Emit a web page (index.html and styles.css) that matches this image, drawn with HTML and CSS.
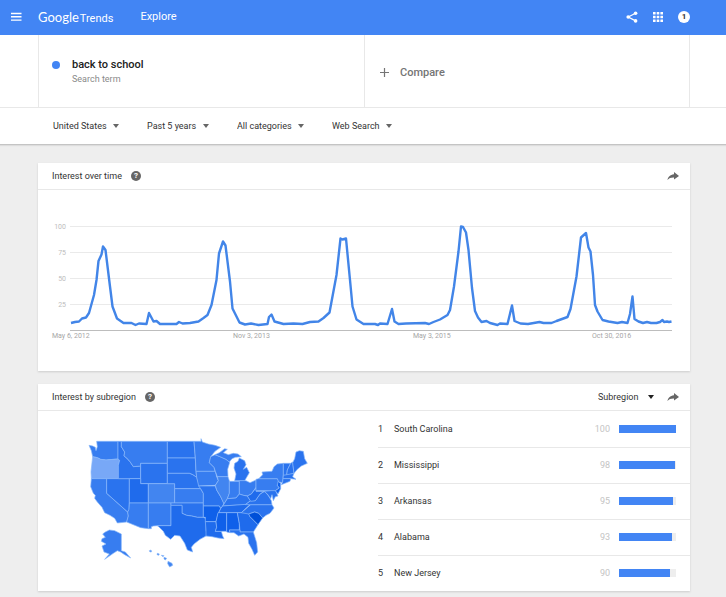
FILE: index.html
```html
<!DOCTYPE html>
<html lang="en">
<head>
    <meta charset="UTF-8">
    <meta name="viewport" content="width=device-width, initial-scale=1.0">
    <title>back to school - Explore - Google Trends</title>
    <link rel="stylesheet" href="styles.css">
</head>
<body>
    <header class="topbar">
        <button type="button" class="icon-btn" aria-label="Main menu">
            <svg width="12" height="10" viewBox="0 0 12 10"><path d="M1 1.5h10.500M1 4.8h10.500M1 8.100h10.500" stroke="#fff" stroke-width="1.4"/></svg>
        </button>
        <a href="#" class="logo"><span class="logo-google">Google</span><span class="logo-trends">Trends</span></a>
        <a href="#" class="explore">Explore</a>
        <div class="topbar-actions">
            <button type="button" class="icon-btn" aria-label="Share">
                <svg width="12" height="12" viewBox="0 0 12 12"><path d="M9.5 2.2L2.3 6l7.2 3.9" fill="none" stroke="#fff" stroke-width="1.2"/><g fill="#fff"><circle cx="9.6" cy="2.2" r="1.8"/><circle cx="2.2" cy="6" r="1.8"/><circle cx="9.6" cy="9.9" r="1.8"/></g></svg>
            </button>
            <button type="button" class="icon-btn" aria-label="Apps">
                <svg width="10" height="10" viewBox="0 0 10 10"><path d="M0 1.3h2.6M3.7 1.3h2.6M7.4 1.3H10M0 5h2.6M3.7 5h2.6M7.4 5H10M0 8.7h2.6M3.7 8.7h2.6M7.4 8.7H10" stroke="#fff" stroke-width="2.4"/></svg>
            </button>
            <button type="button" class="badge" aria-label="1 notification">1</button>
        </div>
    </header>

    <!-- Search terms -->
    <section class="terms">
        <div class="term">
            <span class="dot"></span>
            <div>
                <div class="term-name">back to school</div>
                <div class="term-type">Search term</div>
            </div>
        </div>
        <button type="button" class="compare">
            <svg width="9" height="9" viewBox="0 0 9 9"><path d="M4.5 0v9M0 4.5h9" stroke="#757575" stroke-width="1.2"/></svg>
            Compare
        </button>
    </section>

    <!-- Filters -->
    <nav class="filters">
        <div class="dropdown">
            <select aria-label="Location"><option>United States</option></select>
            <svg width="6" height="4" viewBox="0 0 6 4"><path d="M0 0h6L3 4z"/></svg>
        </div>
        <div class="dropdown">
            <select aria-label="Time range"><option>Past 5 years</option></select>
            <svg width="6" height="4" viewBox="0 0 6 4"><path d="M0 0h6L3 4z"/></svg>
        </div>
        <div class="dropdown">
            <select aria-label="Category"><option>All categories</option></select>
            <svg width="6" height="4" viewBox="0 0 6 4"><path d="M0 0h6L3 4z"/></svg>
        </div>
        <div class="dropdown">
            <select aria-label="Search type"><option>Web Search</option></select>
            <svg width="6" height="4" viewBox="0 0 6 4"><path d="M0 0h6L3 4z"/></svg>
        </div>
    </nav>

    <main>
        <section class="card">
            <div class="card-header">
                <h2>Interest over time</h2>
                <button type="button" class="help" aria-label="Help">?</button>
                <button type="button" class="icon-btn share" aria-label="Share">
                    <svg width="12" height="10" viewBox="0 0 12 10"><path d="M7 1l5 4-5 3.6V6.4C4 6.3 2 7 .4 9 1 6 3 3.6 7 3.2z" fill="#666"/></svg>
                </button>
            </div>
            <svg class="chart" viewBox="0 0 652 181" role="img" aria-label="Interest over time">
                <path class="grid" d="M32 36.5H634M32 62.5H634M32 88.5H634M32 114.5H634"/>
                <path class="axis" d="M32 140.5H634"/>
                <g class="y-labels">
                    <text x="28" y="39">100</text>
                    <text x="28" y="65">75</text>
                    <text x="28" y="91">50</text>
                    <text x="28" y="117">25</text>
                </g>
                <g class="x-labels">
                    <text x="14" y="148">May 6, 2012</text>
                    <text x="195" y="148">Nov 3, 2013</text>
                    <text x="375" y="148">May 3, 2015</text>
                    <text x="554" y="148">Oct 30, 2016</text>
                </g>
                <polyline class="line" stroke-width="2.4" points="33,133 37,132 41,131.5 44,128.5 48,127.5 51,123 56,105 58.5,90 60.5,71 63.5,64.5 65,56.5 67.5,60 72,96.5 74.5,116.5 79,128.5 85.5,133 93.5,133 97.5,135 101,133.5 108.5,134 111,123 115.5,131.5 118.5,131 122,134 138.5,134 141,132 144.5,133.5 152,133 160.5,131.5 165.5,128 169.5,125 173.5,115 178.5,90 181,63.5 185,51.5 187.5,55.5 192,91.5 194.5,118.5 201.5,132.5 207,134.5 213,133.5 220.5,135 229.5,134 231,127 233.5,124.5 236.5,131.5 245.5,134 255.5,133.5 264.5,134 272,132 280.5,131.5 285.5,128 291.5,122.5 298.5,85 302.5,48.5 304.5,49.5 308,48.5 312,90 314.5,116.5 318.5,129.5 325.5,134 337,134 340,135 342,133.5 349.5,134 354,119 356.5,131.5 360.5,134 368,133.5 387,133 391,134 395.5,132 402,129.5 409.5,125 412,120 416,96.5 420.5,61.5 423,36.5 425,37 428,42.5 430.5,60 434,98 437,121 440,127.5 443.5,132 448.5,131 452,133 459.5,135 462,133.5 469.5,134 474,115.5 476.5,131 482.5,133.5 490,134 501.5,132 505.5,133 513.5,133 518.5,131 529.5,127 532.5,119 538.5,86.5 543,47.5 548,43 550.5,57.5 552.5,61.5 555,85 557,115 559.5,121.5 564.5,130 570.5,131.5 579.5,133 584,132 589.5,133 592,124 594.5,106.5 596.5,129 600.5,131.5 605,133 609,132 613,133 618.5,133 622,132 624.5,130 626,132 629,131.5 631,132 633.5,131.5"/>
            </svg>
        </section>

        <section class="card">
            <div class="card-header">
                <h2>Interest by subregion</h2>
                <button type="button" class="help" aria-label="Help">?</button>
                <div class="dropdown dropdown-region">
                    <select aria-label="Resolution"><option>Subregion</option></select>
                    <svg width="6" height="4" viewBox="0 0 6 4"><path d="M0 0h6L3 4z"/></svg>
                </div>
                <button type="button" class="icon-btn" aria-label="Share">
                    <svg width="12" height="10" viewBox="0 0 12 10"><path d="M7 1l5 4-5 3.6V6.4C4 6.3 2 7 .4 9 1 6 3 3.6 7 3.2z" fill="#666"/></svg>
                </button>
            </div>
            <div class="region">
                <div class="map-wrap">
                    <svg class="map" viewBox="0 0 720 420" role="img" aria-label="Interest by state">
                        <!-- West -->
                        <path class="s3" d="M50 34H114V87L100 88 78 90 62 88 52 83 38 80 34 62 27 46 38 48 46 52 48 62 52 50Z"/>
                        <path class="s1" d="M38 80L52 83 62 88 78 90 114 87 119 91 115 106V146H34L33 125Z"/>
                        <path class="s3" d="M34 146H80V190L143 246 145 258 140 276 112 279 104 265 90 256 74 248 66 232 52 216 44 205 46 196 40 190 32 170Z"/>
                        <path class="s4" d="M80 146H148V219L147 238 143 246 80 190Z"/>
                        <path class="s4" d="M114 34H124V50L134 66 132 78 140 84 150 95 160 110 182 108V146H115V106L119 91 114 87Z"/>
                        <path class="s3" d="M124 34H262V100H182V108L160 110 150 95 140 84 132 78 134 66 124 50Z"/>
                        <path class="s4" d="M182 100H262V161H182Z"/>
                        <path class="s5" d="M148 146H182V161H205V219H148Z"/>
                        <path class="s2" d="M205 161H284V219H205Z"/>
                        <path class="s3" d="M148 219H205V296L182 293 140 276 145 258 143 246 147 238Z"/>
                        <path class="s3" d="M205 219H273V287H232L220 288 214 290V296H205Z"/>
                        <!-- Plains -->
                        <path class="s4" d="M262 34H342L346 84H262Z"/>
                        <path class="s4" d="M262 84H346L348 124 350 142 338 134 328 130H262Z"/>
                        <path class="s4" d="M262 130H328L338 134 350 142 356 160 362 176H284V161H262Z"/>
                        <path class="s3" d="M284 176H362L370 190V219H284Z"/>
                        <path class="s4" d="M273 219H370V262L352 262 335 258 320 256 306 250V226H273Z"/>
                        <path class="s5" d="M273 226H306V250L320 256 335 258 352 262 370 262 378 266V300L382 316 360 328 342 342 334 352 338 366 322 360 314 340 300 318 284 316 272 328 256 316 250 304 236 290 232 287H273Z"/>
                        <!-- Alaska and Hawaii -->
                        <path class="s3" d="M88 300L104 302 124 312V362L136 366 152 384 134 374 122 366 112 362 100 370 74 388 88 372 72 366 66 348 78 342 64 334 66 326 76 322 68 312 76 306Z"/>
                        <path class="s2" d="M208 362l5-2 2 5-5 1ZM232 370l6 2-2 4-5-2ZM244 376l8 1-3 3ZM252 382l8 3-4 5-4-3ZM264 394l12 6 2 6-9 5-6-10Z"/>
                        <g transform="translate(330 0)">
                            <!-- Midwest -->
                            <path class="s3" d="M12 34H33V26L37 36 55 42 66 44 75 46 92 52 75 64 62 80 58 98 72 112 75 124H18L16 84Z"/>
                            <path class="s3" d="M18 124H76L80 140 85 152 76 166 26 168 20 142Z"/>
                            <path class="s4" d="M26 168H76L80 180 92 200 102 220 98 228 92 236 88 228H40V190L32 176Z"/>
                            <path class="s3" d="M62 80L75 74 90 80 108 88 116 94 119 98 113 118 114 140H82L76 124 72 112 58 98Z"/>
                            <path class="s2" d="M82 140H114L118 152V190L112 206 102 222 92 200 80 180 76 166 85 152Z"/>
                            <path class="s3" d="M75 74L88 68 104 56 112 58 100 68 115 74 130 70 144 72 154 80 136 82 126 86 118 96 108 88 90 80Z"/>
                            <path class="s4" d="M134 152L138 132 132 114 134 100 144 94 148 84 164 92 168 104 160 118 170 112 178 128 170 142 164 152Z"/>
                            <path class="s3" d="M118 154H148V192L138 204 112 206 118 190Z"/>
                            <path class="s3" d="M148 152L168 152 180 158 198 150V172L184 192 172 198 160 196 148 192Z"/>
                            <!-- South -->
                            <path class="s6" d="M40 228H88L92 236 84 252 78 275H46V262H40Z"/>
                            <path class="s5" d="M46 275H78L80 292 76 304H94L98 318 102 326 84 324 66 320 48 318V300Z"/>
                            <path class="s4" d="M102 222L112 206 138 204 148 192 160 196 172 198 182 212 166 224 98 228Z"/>
                            <path class="s5" d="M98 228L182 222 160 242 154 248H86L92 236Z"/>
                            <path class="s6" d="M84 248H110V304H94L76 304 80 292 78 275Z"/>
                            <path class="s6" d="M110 248H142L148 280V300H118L120 308 110 306Z"/>
                            <path class="s5" d="M142 248H178L180 260 192 272 204 284 190 306H150L148 280Z"/>
                            <path class="s4" d="M118 300H150V306H190L200 338 203 366 194 376 186 358 176 340 174 322 162 312 146 318 132 308 120 308Z"/>
                            <path class="s4" d="M154 248L182 224H246L252 234 240 250 228 256 218 264 206 250 194 246 176 252Z"/>
                            <path class="s7" d="M176 252L194 246 206 250 218 264 204 284 192 272 180 260Z"/>
                            <path class="s4" d="M166 224L182 212 196 212 210 192 224 184 236 198 244 212 246 224Z"/>
                            <path class="s5" d="M172 198L184 192 198 174V184H222L210 192 196 212 182 214Z"/>
                            <path class="s4" d="M222 184L256 180 264 198 256 200 250 212 246 194 242 206 232 192Z"/>
                            <!-- Northeast -->
                            <path class="s3" d="M198 148L206 146H262L268 156 262 166 268 174 256 182H198Z"/>
                            <path class="s6" d="M264 154L272 160 272 176 264 192 256 182 268 174 262 166Z"/>
                            <path class="s3" d="M206 146L218 134 216 126 246 124 252 110 262 102 280 100V134L278 158 266 156 262 146Z"/>
                            <path class="s4" d="M280 100H302L292 120 290 136H280Z"/>
                            <path class="s4" d="M302 100L308 96 312 130 290 136 292 120Z"/>
                            <path class="s4" d="M308 98L314 86 318 66 328 62 340 64 344 86 352 100 334 108 322 118 312 130Z"/>
                            <path class="s4" d="M280 136L312 130 308 140 318 148 302 146H279Z"/>
                            <path class="s4" d="M279 146H302L300 154 274 164 278 156Z"/>
                        </g>
                    </svg>
                </div>
                <table class="ranking">
                    <tr><td class="rank">1</td><td>South Carolina</td><td class="value">100</td><td class="bar-cell"><div class="bar"><div class="fill" style="width: 100%"></div></div></td></tr>
                    <tr><td class="rank">2</td><td>Mississippi</td><td class="value">98</td><td class="bar-cell"><div class="bar"><div class="fill" style="width: 98%"></div></div></td></tr>
                    <tr><td class="rank">3</td><td>Arkansas</td><td class="value">95</td><td class="bar-cell"><div class="bar"><div class="fill" style="width: 95%"></div></div></td></tr>
                    <tr><td class="rank">4</td><td>Alabama</td><td class="value">93</td><td class="bar-cell"><div class="bar"><div class="fill" style="width: 93%"></div></div></td></tr>
                    <tr><td class="rank">5</td><td>New Jersey</td><td class="value">90</td><td class="bar-cell"><div class="bar"><div class="fill" style="width: 90%"></div></div></td></tr>
                </table>
            </div>
        </section>
    </main>
</body>
</html>
```

FILE: styles.css
```css
* {
    box-sizing: border-box;
}
body {
    margin: 0;
    background-color: #eeeeee;
    color: #333;
    font-family: Roboto, "Liberation Sans", sans-serif;
    font-size: 9px;
}
button,
select {
    margin: 0;
    padding: 0;
    border: none;
    background: none;
    color: inherit;
    font: inherit;
    cursor: pointer;
}
svg {
    display: block;
}
a {
    color: inherit;
    text-decoration: none;
}

/* Top bar */
.topbar {
    display: flex;
    align-items: center;
    height: 35px;
    padding: 0 36px 2px 10px;
    background-color: #4285f4;
    color: #ffffff;
}
.logo {
    display: flex;
    align-items: baseline;
    gap: 1px;
    margin-left: 16px;
}
.logo-google {
    font-family: Lato, sans-serif;
    font-size: 13px;
}
.logo-trends {
    font-size: 11px;
}
.explore {
    margin-left: 27px;
    font-size: 11px;
}
.topbar-actions {
    display: flex;
    align-items: center;
    gap: 15px;
    margin-left: auto;
}
.badge {
    width: 12px;
    height: 12px;
    border-radius: 50%;
    background-color: #ffffff;
    color: #333;
    font-size: 8px;
    font-weight: bold;
    line-height: 12px;
}

/* Search terms */
.terms {
    display: grid;
    grid-template-columns: 1fr 1fr;
    height: 73px;
    padding: 0 36px 0 38px;
    background-color: #ffffff;
    border-bottom: 1px solid #e8e8e8;
}
.term,
.compare {
    display: flex;
    align-items: center;
    border-left: 1px solid #e8e8e8;
}
.term {
    gap: 12px;
    padding-left: 13px;
}
.dot {
    width: 8px;
    height: 8px;
    margin-bottom: 12px;
    border-radius: 50%;
    background-color: #4285f4;
}
.term-name {
    color: #212121;
    font-size: 11px;
    font-weight: 500;
    line-height: 16px;
}
.term-type {
    color: #8a8a8a;
    line-height: 12px;
}
.compare {
    gap: 11px;
    padding: 2px 0 0 15px;
    border-right: 1px solid #e8e8e8;
    color: #757575;
    font-size: 11px;
    font-weight: 500;
}

/* Filters */
.filters {
    display: flex;
    align-items: center;
    gap: 28px;
    height: 37px;
    padding-left: 53px;
    background-color: #ffffff;
    border-bottom: 1px solid #c4c4c4;
    box-shadow: 0 1px 1px #dddddd;
}
.dropdown {
    display: grid;
    align-items: center;
}
.dropdown select,
.dropdown svg {
    grid-area: 1 / 1;
}
.dropdown select {
    appearance: none;
    padding-right: 12px;
}
.dropdown svg {
    justify-self: end;
    fill: #666;
    pointer-events: none;
}

/* Cards */
main {
    padding: 18px 36px 6px 38px;
}
.card {
    margin-bottom: 13px;
    background-color: #ffffff;
    box-shadow: 0 1px 2px #cccccc;
}
.card:last-child {
    margin-bottom: 0;
}
.card-header {
    display: flex;
    align-items: center;
    height: 27px;
    padding: 0 11px 0 14px;
    border-bottom: 1px solid #e8e8e8;
}
.card-header h2 {
    margin: 0;
    font-size: 9px;
    font-weight: normal;
}
.help {
    width: 10px;
    height: 10px;
    margin-left: 9px;
    border-radius: 50%;
    background-color: #666;
    color: #ffffff;
    font-size: 8px;
    font-weight: bold;
    line-height: 10px;
}
.share {
    margin-left: auto;
}
.dropdown-region {
    margin: 0 13px 0 auto;
}
.dropdown-region select {
    padding-right: 15px;
}
.dropdown-region svg {
    fill: #212121;
}

/* Line chart */
.chart {
    width: 100%;
    font-size: 7px;
}
.grid {
    stroke: #eaeaea;
}
.axis {
    stroke: #bdbdbd;
}
.y-labels {
    fill: #bdbdbd;
    text-anchor: end;
}
.x-labels {
    fill: #a6a6a6;
}
.line {
    fill: none;
    stroke: #4285e8;
    stroke-linejoin: round;
}

/* Map and ranking */
.region {
    display: grid;
    grid-template-columns: 340px 1fr;
}
.map-wrap {
    padding: 19px 58px 0 42px;
}
.map {
    width: 100%;
}
.map path {
    stroke: #8ab8fa;
    stroke-width: 2;
    stroke-linejoin: round;
}
.s1 { fill: #78a8f7; }
.s2 { fill: #4285f0; }
.s3 { fill: #377df0; }
.s4 { fill: #2a73ee; }
.s5 { fill: #1f6bec; }
.s6 { fill: #0f60ea; }
.s7 { fill: #0050d8; }
.ranking {
    border-collapse: collapse;
}
.ranking td {
    height: 36px;
    padding: 0;
    border-bottom: 1px solid #e8e8e8;
}
.ranking tr:last-child td {
    border-bottom: none;
}
.ranking .rank {
    width: 16px;
}
.ranking .value {
    padding-right: 9px;
    color: #c4c4c4;
    text-align: right;
}
.ranking .bar-cell {
    width: 71px;
    padding-right: 14px;
}
.bar {
    height: 8px;
    background-color: #eeeeee;
}
.fill {
    height: 8px;
    background-color: #4285f4;
}
```
